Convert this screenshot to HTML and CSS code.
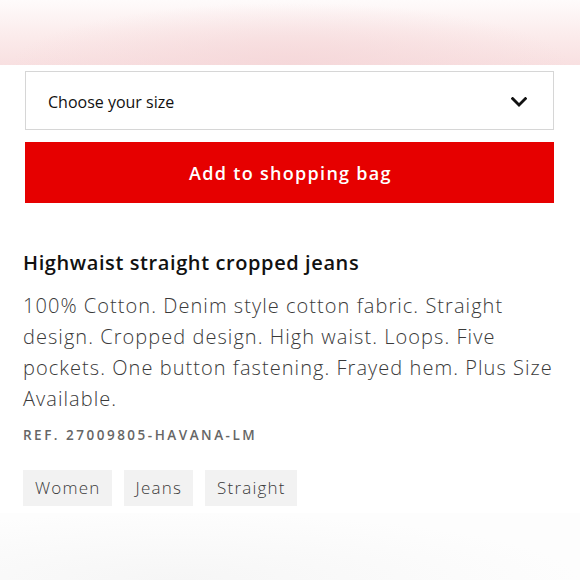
FILE: index.html
```html
<!DOCTYPE html>
<html>
<head>
<meta charset="utf-8">
<link rel="stylesheet" href="styles.css">
</head>
<body>
<div class="top-band"></div>
<main class="product">
  <div class="size-select">
    <span class="size-label">Choose your size</span>
    <svg class="chevron" width="16" height="10" viewBox="0 0 16 10"><path d="M1.6 1.6 L8 8 L14.4 1.6" fill="none" stroke="#111" stroke-width="2.8" stroke-linecap="square"/></svg>
  </div>
  <button class="add-btn">Add to shopping bag</button>
  <h1 class="title">Highwaist straight cropped jeans</h1>
  <p class="desc">100% Cotton. Denim style cotton fabric. Straight design. Cropped design. High waist. Loops. Five pockets. One button fastening. Frayed hem. Plus Size Available.</p>
  <div class="ref">REF. 27009805-HAVANA-LM</div>
  <div class="tags">
    <span class="tag">Women</span>
    <span class="tag">Jeans</span>
    <span class="tag">Straight</span>
  </div>
</main>
<div class="bottom-band"></div>
</body>
</html>
```
FILE: styles.css
```css
html, body {
  margin: 0;
  padding: 0;
  background: #fff;
  font-family: "Open Sans", "Noto Sans", sans-serif;
  width: 580px;
  height: 580px;
  overflow: hidden;
}
.top-band {
  height: 65px;
  background:
    radial-gradient(ellipse 60% 120% at 50% 100%, rgba(245,215,217,0.9), rgba(245,215,217,0) 80%),
    linear-gradient(to bottom, #fefbfb 0%, #fbeaea 60%, #f8e0e1 100%);
}
.product {
  padding: 6px 20px 0 23px;
}
.size-select {
  margin: 0 6px 0 2px;
  height: 57px;
  border: 1px solid #d6d6d6;
  display: flex;
  align-items: center;
  justify-content: space-between;
  padding: 0 26px 0 22px;
}
.size-label {
  font-size: 16px;
  color: #111;
  padding-top: 3px;
}
.chevron {
  display: block;
  margin-top: 3px;
}
.add-btn {
  display: block;
  margin: 12px 6px 0 2px;
  width: calc(100% - 8px);
  height: 61px;
  border: none;
  background: #e60000;
  color: #fff;
  font-family: inherit;
  font-size: 18px;
  font-weight: 600;
  letter-spacing: 1.3px;
  padding: 0 0 0 2px;
}
.title {
  margin: 48px 0 0;
  font-size: 20px;
  font-weight: 600;
  color: #111;
  line-height: 24px;
  letter-spacing: 0.6px;
}
.desc {
  margin: 15px 0 0;
  font-size: 20px;
  font-weight: 300;
  line-height: 31px;
  color: #3a3a3a;
  letter-spacing: 1.05px;
}
.ref {
  margin-top: 13px;
  font-size: 13.5px;
  line-height: 16px;
  font-weight: 600;
  letter-spacing: 2.5px;
  color: #666;
}
.tags {
  display: flex;
  gap: 12px;
  margin-top: 27px;
}
.tag {
  background: #f2f2f2;
  height: 36px;
  line-height: 36px;
  padding: 0 11px 0 12px;
  font-size: 17px;
  font-weight: 300;
  color: #3a3a3a;
  letter-spacing: 1.2px;
}
.bottom-band {
  margin-top: 7px;
  height: 67px;
  background: radial-gradient(ellipse 70% 100% at 30% 100%, #f6f6f6, #fbfbfb 70%, #fdfdfd);
}
```
